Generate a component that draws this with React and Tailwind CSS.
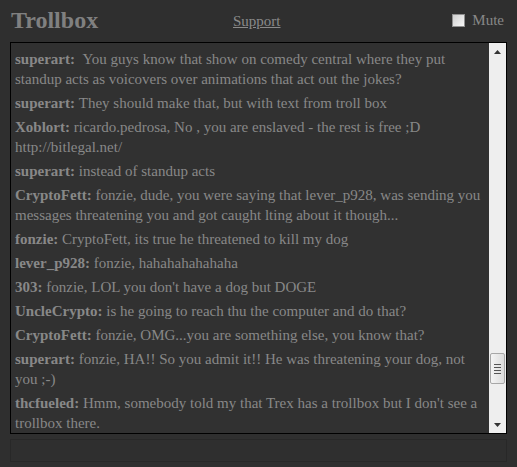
import React from 'react';

const messages = [
  ['superart:', ['\u00a0You guys know that show on comedy central where they put', 'standup acts as voicovers over animations that act out the jokes?']],
  ['superart:', ['They should make that, but with text from troll box']],
  ['Xoblort:', ['ricardo.pedrosa, No , you are enslaved - the rest is free ;D', 'http://bitlegal.net/']],
  ['superart:', ['instead of standup acts']],
  ['CryptoFett:', ['fonzie, dude, you were saying that lever_p928, was sending you', 'messages threatening you and got caught lting about it though...']],
  ['fonzie:', ['CryptoFett, its true he threatened to kill my dog']],
  ['lever_p928:', ['fonzie, hahahahahahaha']],
  ['303:', ['fonzie, LOL you don\'t have a dog but DOGE']],
  ['UncleCrypto:', ['is he going to reach thu the computer and do that?']],
  ['CryptoFett:', ['fonzie, OMG...you are something else, you know that?']],
  ['superart:', ['fonzie, HA!! So you admit it!! He was threatening your dog, not', 'you ;-)']],
  ['thcfueled:', ['Hmm, somebody told my that Trex has a trollbox but I don\'t see a', 'trollbox there.']],
];

const Scrollbar = () => (
  <div className="w-[17px] shrink-0 bg-[#eeeeee] flex flex-col items-center">
    <div className="h-[17px] w-full flex items-center justify-center">
      <svg width="7" height="4" viewBox="0 0 7 4">
        <path d="M3.5 0 L7 4 L0 4 Z" fill="#333" />
      </svg>
    </div>
    <div className="flex-1" />
    <div className="w-[15px] h-[31px] border border-[#a7a7a7] rounded-[2px] bg-gradient-to-r from-[#f4f4f4] to-[#dcdcdc] flex flex-col items-center justify-center gap-[2px]">
      <div className="w-[7px] h-px bg-[#555]" />
      <div className="w-[7px] h-px bg-[#555]" />
      <div className="w-[7px] h-px bg-[#555]" />
      <div className="w-[7px] h-px bg-[#555]" />
    </div>
    <div className="h-[32px]" />
    <div className="h-[17px] w-full flex items-center justify-center">
      <svg width="7" height="4" viewBox="0 0 7 4">
        <path d="M0 0 L7 0 L3.5 4 Z" fill="#333" />
      </svg>
    </div>
  </div>
);

export default function App() {
  return (
    <div className="w-[517px] h-[467px] bg-[#2f2f2f] text-[#888888] font-['Liberation_Serif',serif] overflow-hidden">
      <div className="h-[42px] flex items-center pl-[11px] pr-[13px]">
        <div className="w-[222px] text-[24px] font-bold text-[#808080] leading-none -mt-[2px]">Trollbox</div>
        <a className="text-[15px] underline text-[#8a8a8a] leading-none">Support</a>
        <div className="flex-1" />
        <div className="flex items-center gap-[7px] -mt-[2px]">
          <span className="w-[13px] h-[13px] border border-[#8f8f8f] bg-gradient-to-br from-[#cfcfcf] to-[#f8f8f8]" />
          <span className="text-[15px] leading-none">Mute</span>
        </div>
      </div>
      <div className="mx-[10px] h-[392px] border border-black bg-[#313131] flex">
        <div className="flex-1 overflow-hidden pl-[4px] pt-[6px] text-[15px] leading-[20px] flex flex-col gap-[4px]">
          {messages.map(([name, lines], i) => (
            <div key={i}>
              {lines.map((line, j) => (
                <div key={j} className="whitespace-nowrap">
                  {j === 0 && <span className="font-bold">{name} </span>}
                  {line}
                </div>
              ))}
            </div>
          ))}
        </div>
        <Scrollbar />
      </div>
      <div className="mx-[10px] mt-[5px] h-[23px] border border-[#282828] bg-[#2f2f2f]" />
    </div>
  );
}
